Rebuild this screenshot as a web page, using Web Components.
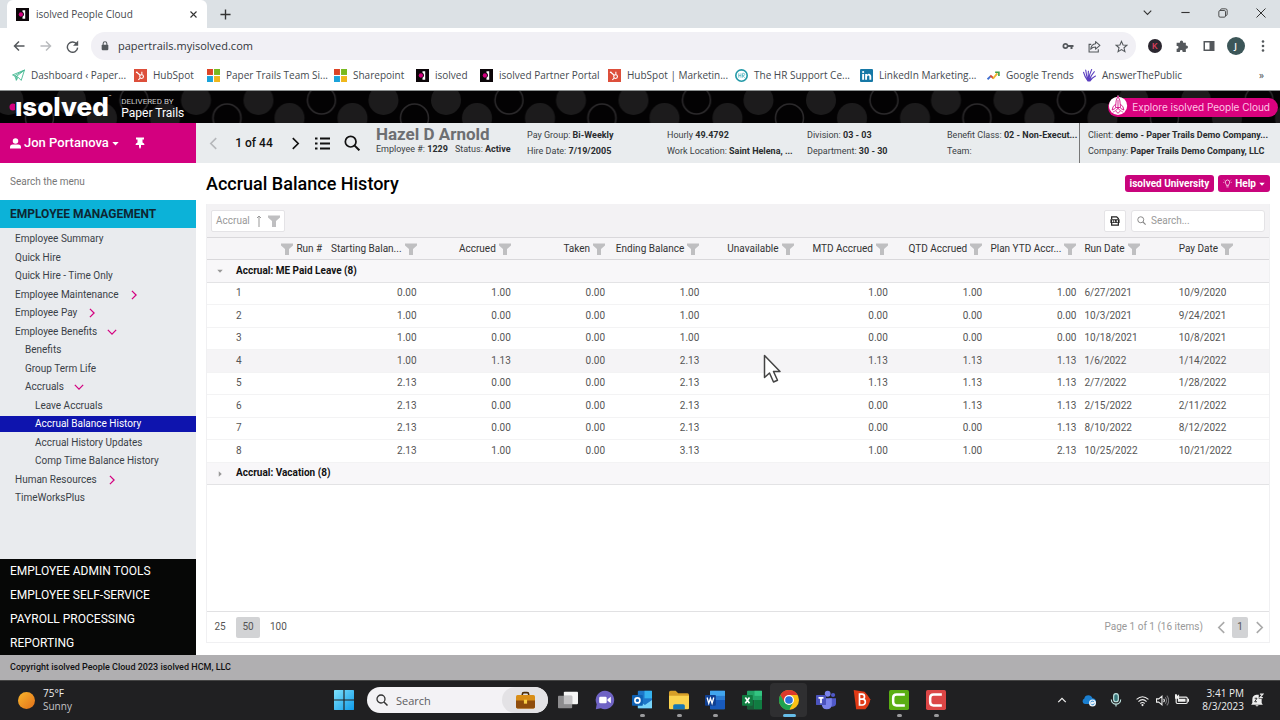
<!DOCTYPE html>
<html lang="en">
<head>
<meta charset="utf-8">
<meta name="viewport" content="width=device-width, initial-scale=1">
<title>isolved People Cloud</title>
<style>
    html, body {
        margin: 0;
        height: 100%;
    }

    body {
        --pink: #d3007f;
        --chrome-font: "Open Sans", "Noto Sans", sans-serif;
        display: flex;
        flex-direction: column;
        font: 10px/16px Roboto, "Liberation Sans", sans-serif;
        color: #333;
        background: #fff;
    }

    .workspace {
        flex: 1;
        display: flex;
        min-height: 0;
    }

    .content {
        flex: 1;
        min-width: 0;
        display: flex;
        flex-direction: column;
    }
</style>
</head>
<body>
    <browser-tabs></browser-tabs>
    <browser-toolbar></browser-toolbar>
    <bookmarks-bar></bookmarks-bar>
    <app-header></app-header>
    <div class="workspace">
        <side-menu></side-menu>
        <main class="content">
            <employee-bar></employee-bar>
            <page-title>Accrual Balance History</page-title>
            <accrual-grid></accrual-grid>
        </main>
    </div>
    <app-footer>Copyright isolved People Cloud 2023 isolved HCM, LLC</app-footer>
    <task-bar></task-bar>
    <mouse-pointer></mouse-pointer>

<script>
// All icons are drawn on a 24x24 box
const line = 'fill="none" stroke="currentColor" stroke-width="2"';
const bold = 'fill="none" stroke="currentColor" stroke-width="3"';

const icons = {
    close: `<path ${bold} d="M4 4l16 16M20 4L4 20"/>`,
    closeThin: `<path ${line} d="M3 3l18 18M21 3L3 21"/>`,
    plus: `<path ${bold} d="M12 1v22M1 12h22"/>`,
    down: `<path ${bold} d="M2 7l10 10L22 7"/>`,
    up: `<path ${bold} d="M3 17l9-9 9 9"/>`,
    left: `<path ${bold} d="M17 2L7 12l10 10"/>`,
    right: `<path ${bold} d="M7 2l10 10L7 22"/>`,
    minimize: `<path ${bold} d="M1 12h22"/>`,
    restore: `<path ${line} d="M6 6V5q0-3 3-3h9q4 0 4 4v9q0 3-3 3h-1"/><rect ${line} x="2" y="6" width="16" height="16" rx="3"/>`,
    back: `<path ${bold} d="M23 12H3M12 3l-9 9 9 9"/>`,
    forward: `<path ${bold} d="M1 12h20M12 3l9 9-9 9"/>`,
    reload: `<path fill="none" stroke="currentColor" stroke-width="2.6" d="M20 8a9.500 9.500 0 1 0 1.500 6"/><path fill="currentColor" d="M22.500 1v9.500H13z"/>`,
    lock: `<rect fill="currentColor" x="4" y="9" width="16" height="13" rx="2"/><path fill="none" stroke="currentColor" stroke-width="2.500" d="M7.500 10V6.500a4.500 4.500 0 0 1 9 0V10"/>`,
    key: `<path fill="currentColor" fill-rule="evenodd" d="M7 6a6 6 0 1 0 5.700 8H17v4h4v-4h2v-4H12.700A6 6 0 0 0 7 6zm0 3.500a2.500 2.500 0 1 1 0 5 2.500 2.500 0 0 1 0-5z"/>`,
    share: `<path ${line} d="M6 8H2v14h17v-5"/><path ${line} stroke-linejoin="round" d="M14 3l8 7-8 7v-4q-6 0-9 4 1-9 9-10z"/>`,
    star: `<path ${line} d="M12 2.500l2.900 6.600 7.100.6-5.400 4.700 1.700 7-6.300-3.800-6.300 3.800 1.700-7L2 9.700l7.100-.6z"/>`,
    puzzle: `<path fill="currentColor" d="M9 4a3 3 0 0 1 6 0v1h5v5h1a3 3 0 0 1 0 6h-1v6h-6v-1a2.500 2.500 0 0 0-5 0v1H3v-6h1a2.500 2.500 0 0 0 0-5H3V5h6z"/>`,
    panel: `<path fill="currentColor" fill-rule="evenodd" d="M1 2h22v20H1zm3 3v14h9V5z"/>`,
    dots: `<g fill="currentColor"><circle cx="12" cy="3" r="2.600"/><circle cx="12" cy="12" r="2.600"/><circle cx="12" cy="21" r="2.600"/></g>`,
    door: `<path fill="#0c0609" d="M0 0h24v24H0z"/><path fill="#fff" d="M12 4h5v16h-5v-4a5 5 0 0 0 0-9z"/><circle fill="#d3007f" cx="9" cy="12" r="4"/>`,
    plane: `<g fill="none" stroke="#3fb68e" stroke-width="1.600"><path d="M1 11L23 2l-6 19-6-6z"/><path d="M23 2L8 14v7l3-6M23 2L5 12.500M5 12.500L8 20"/></g>`,
    hubspot: `<path fill="#dd4f3b" d="M0 0h24v24H0z"/><g fill="none" stroke="#fff" stroke-width="2"><circle cx="14" cy="14" r="3.500"/><path d="M5 6l6.500 5.500M14.500 5v5.500M11.500 17L8 20"/></g><circle fill="#fff" cx="5" cy="6" r="1.600"/>`,
    microsoft: `<path fill="#dd4426" d="M0 0h11v11H0z"/><path fill="#78b91f" d="M13 0h11v11H13z"/><path fill="#1ba3da" d="M0 13h11v11H0z"/><path fill="#efb71b" d="M13 13h11v11H13z"/>`,
    hr: `<circle fill="#fff" stroke="#249aa8" stroke-width="3" cx="12" cy="12" r="10.500"/><path fill="none" stroke="#58b6c1" stroke-width="1.500" d="M7 8v8M11 8v8M7 12h4M14 16V8h2q2 0 2 2t-2 2h-2l4 4"/>`,
    linkedin: `<rect fill="#1678a6" width="24" height="24" rx="2"/><path fill="#fff" d="M4 9h3.500v11H4zM9.500 9H13v1.600q3.500-3.600 7 .4.800 1 .8 3V20h-3.500v-5.500q0-2.500-2-2.500T13 14.500V20H9.500z"/><circle fill="#fff" cx="5.800" cy="5.500" r="2"/>`,
    trends: `<path fill="none" stroke="#3f6fd2" stroke-width="3.400" d="M1 19l6-6"/><path fill="none" stroke="#d34b3d" stroke-width="3.400" d="M6 12l6 5"/><path fill="none" stroke="#efb52c" stroke-width="3.400" d="M11 18l8-10"/><path fill="none" stroke="#42a047" stroke-width="3" d="M15 6h7v7"/>`,
    coral: `<g fill="none" stroke="#5b3fc0" stroke-width="2" stroke-linecap="round"><path d="M1 6q2 8 8 16M5 2q1 10 5 20M10 4q-1 8 1 18M16 1q-5 9-5 21M21 5Q14 12 12 22M23 13q-6 3-10 9"/></g>`,
    user: `<circle fill="currentColor" cx="12" cy="6.500" r="6"/><path fill="currentColor" d="M0 23v-3q0-6 6-6h12q6 0 6 6v3z"/>`,
    pin: `<path fill="currentColor" d="M4 1h16v4h-3v6q4 1 4 5h-7v4l-2 4-2-4v-4H3q0-4 4-5V5H4z"/>`,
    caret: `<path fill="currentColor" d="M1 7h22L12 19z"/>`,
    caretRight: `<path fill="currentColor" d="M7 1v22l12-11z"/>`,
    list: `<path fill="none" stroke="currentColor" stroke-width="3" d="M8 4h16M8 12h16M8 20h16M0 4h4M0 12h4M0 20h4"/>`,
    search: `<circle fill="none" stroke="currentColor" stroke-width="2.600" cx="10" cy="10" r="8"/><path fill="none" stroke="currentColor" stroke-width="3" d="M16 16l7 7"/>`,
    filter: `<path fill="currentColor" d="M0 1h24v4l-8 7v12H8V12L0 5z"/>`,
    sort: `<path ${line} d="M12 24V2M8 6l4-4 4 4"/>`,
    xlsx: `<path fill="none" stroke="currentColor" stroke-width="3" d="M4 8V2h12l4 4v2M4 17v5h16v-5"/><path fill="currentColor" fill-rule="evenodd" d="M1 8h22v9H1zm4 2v5h3v-5zm5 0v5h3v-2h-1v-3zm6 0v5h3v-5z"/>`,
    bulb: `<path ${line} d="M9 17q0-3-2-5a6 6 0 1 1 10 0q-2 2-2 5zM9 21h6M1 9h2M21 9h2M3 2l2 2M21 2l-2 2"/>`,
    rocket: `<circle fill="#fff" cx="12" cy="13" r="11"/><path fill="#fff" d="M9 5l3-5 3 5z"/><g fill="none" stroke="#d3007f" stroke-width="1"><path d="M12 1q-3 5-3 14h6q0-9-3-14zM12 6v11M9 11q-4 3-4 7l4-2M15 11q4 3 4 7l-4-2M9 19l3 3 3-3-3-3zM6 21l2-2M18 21l-2-2"/></g>`,
    windows: `<defs><linearGradient id="w" x2="1" y2="1"><stop stop-color="#7fe1fb"/><stop offset="1" stop-color="#0f9bea"/></linearGradient></defs><path fill="url(#w)" d="M0 1q0-1 1-1h10.300v11.300H0zM12.700 0H23q1 0 1 1v10.300H12.700zM0 12.700h11.300V24H1q-1 0-1-1zM12.700 12.700H24V23q0 1-1 1H12.700z"/>`,
    briefcase: `<path fill="none" stroke="#4b2d0b" stroke-width="2" d="M8 6V4q0-2 2-2h4q2 0 2 2v2"/><rect fill="#d98e17" x="0" y="5" width="24" height="17" rx="2"/><path fill="#8e4c0c" d="M0 12h24v8q0 2-2 2H2q-2 0-2-2z"/><rect fill="#f8cf45" x="10" y="11" width="4" height="5"/>`,
    desktops: `<rect fill="#f5f5f5" x="7" y="2" width="17" height="15" rx="1"/><rect fill="#8d8c8e" x="0" y="7" width="17" height="15" rx="1"/><path fill="#c4c3c5" d="M7 7h10v10H7z"/>`,
    chat: `<path fill="#6f63c4" d="M12 1a11 11 0 1 1-5 20.800L1 23l1-6A11 11 0 0 1 12 1z"/><rect fill="#fff" x="5" y="8" width="9" height="8" rx="1.500"/><path fill="#fff" d="M15 11l4-3v8l-4-3z"/>`,
    outlook: `<rect fill="#1d77c9" x="7" y="1" width="17" height="21" rx="1"/><path fill="#35b2ee" d="M15 1h9v9h-9z"/><path fill="#77d4fa" d="M7 12l8.500 6 8.500-6v10H7z"/><rect fill="#0f62b5" x="0" y="6" width="13" height="13" rx="1"/><circle fill="none" stroke="#fff" stroke-width="2" cx="6.500" cy="12.500" r="3"/>`,
    folder: `<path fill="#d79f28" d="M0 3q0-2 2-2h6l3 3h11q2 0 2 2v4H0z"/><path fill="#fbd34f" d="M0 7h24v15q0 1-1 1H1q-1 0-1-1z"/><path fill="#1677b6" d="M5 23v-4q0-2 2-2h10q2 0 2 2v4z"/>`,
    word: `<rect fill="#2b7cd3" x="6" y="1" width="18" height="22" rx="1"/><path fill="#41a5ee" d="M6 1h18v6H6z"/><path fill="#185abd" d="M6 12h18v11H6z"/><rect fill="#103f91" x="0" y="6" width="13" height="13" rx="1"/><path fill="none" stroke="#fff" stroke-width="1.600" d="M2.500 9l2 7 2-6 2 6 2-7"/>`,
    excel: `<rect fill="#21a366" x="6" y="1" width="18" height="22" rx="1"/><path fill="#33c481" d="M15 1h9v6h-9z"/><path fill="#185c37" d="M6 12h9v11H6z"/><path fill="#107c41" d="M15 12h9v11h-9z"/><rect fill="#107c41" x="0" y="6" width="13" height="13" rx="1"/><path fill="none" stroke="#fff" stroke-width="2" d="M4 9l5 7M9 9l-5 7"/>`,
    chrome: `<circle fill="#fbc116" cx="12" cy="12" r="12"/><path fill="#dd3a2c" d="M1.600 6A12 12 0 0 1 22.400 6H12l-6 9z"/><path fill="#1fa251" d="M1.600 6l5.200 9 5.200 3 1 6A12 12 0 0 1 1.600 6z"/><path fill="#1fa251" d="M12 24l5.200-9-5.200 3z"/><circle fill="#fff" cx="12" cy="12" r="6"/><circle fill="#2d70dd" cx="12" cy="12" r="4.600"/>`,
    teams: `<circle fill="#7b83eb" cx="14" cy="4.500" r="3.500"/><circle fill="#5059c9" cx="20.500" cy="6" r="2.500"/><path fill="#5059c9" d="M16 10h8v6q0 4-4 4h-4z"/><path fill="#7b83eb" d="M7 10h12v7q0 6-6 6t-6-6z"/><rect fill="#4b53bc" x="0" y="6" width="12" height="12" rx="1"/><path fill="none" stroke="#fff" stroke-width="2" d="M3 9.500h6M6 9.500V16"/>`,
    bold: `<path fill="#e03a16" d="M2 0l13 2q4 4 7 9-1 7-6 12H5z"/><path fill="none" stroke="#fff" stroke-width="2" d="M9 5v13h3.500a3.500 3.500 0 0 0 0-7H9h3a3 3 0 0 0 0-6z"/>`,
    camtasia: `<rect fill="#5aae12" width="24" height="24" rx="2"/><path fill="none" stroke="#fff" stroke-width="3" stroke-linejoin="round" d="M19 5.500H9q-4 0-4 4v5q0 4 4 4h10"/>`,
    recorder: `<rect fill="#dc4646" width="24" height="24" rx="2"/><path fill="none" stroke="#fff" stroke-width="3" stroke-linejoin="round" d="M19 5.500H9q-4 0-4 4v5q0 4 4 4h10"/>`,
    sun: `<defs><linearGradient id="s" x2="1" y2="1"><stop stop-color="#f9b62c"/><stop offset="1" stop-color="#e2701a"/></linearGradient></defs><circle fill="url(#s)" cx="12" cy="12" r="12"/>`,
    cloud: `<path fill="#1b7fd0" d="M5 19a5 5 0 0 1-1-9.500Q5 4 11 4q5 0 7 5 5 0 6 5v5z"/><circle fill="#e9f2f8" cx="18" cy="17" r="6"/><path fill="none" stroke="#1b7fd0" stroke-width="1.600" d="M15 16a3 3 0 0 1 5.500-.500M21 18a3 3 0 0 1-5.500.500"/>`,
    mic: `<rect fill="#39777b" stroke="#bfe2e0" stroke-width="2" x="8" y="1" width="8" height="14" rx="4"/><path fill="none" stroke="#bfe2e0" stroke-width="2" d="M4 11a8 8 0 0 0 16 0M12 19v4"/>`,
    wifi: `<g ${line}><path d="M1 10q11-10 22 0M4.500 14q7.500-7 15 0M8 17.500q4-3.500 8 0"/></g><circle fill="currentColor" cx="12" cy="20.500" r="2"/>`,
    sound: `<path ${line} d="M1 9h4l6-5v16l-6-5H1zM14 9q3 3 0 6"/><path fill="none" stroke="#77777a" stroke-width="2" d="M17 6q5 6 0 12M20 3q7 9 0 18"/>`,
    battery: `<rect ${line} x="2" y="7" width="19" height="11" rx="2"/><path fill="currentColor" d="M5 10h13v5H5zM22 10h2v5h-2zM0 2h3l1 3 3-3v8H0z"/>`,
    bell: `<path fill="currentColor" d="M4 17V11q0-7 7-8h4v7h5v7l2 3H2zM9 21h6q-3 4-6 0z"/><path fill="none" stroke="currentColor" stroke-width="2" d="M17 2h5l-5 6h5"/><path fill="none" stroke="#202022" stroke-width="1.500" d="M8 9h4l-4 6h4"/>`
};

class UiIcon extends HTMLElement {
    connectedCallback() {
        const size = this.getAttribute('size') || 14;
        this.attachShadow({ mode: 'open' });
        this.shadowRoot.innerHTML = `
            <style>
                :host { display: inline-flex; flex: none; }
                svg { display: block; }
            </style>
            <svg width="${size}" height="${size}" viewBox="0 0 24 24" aria-hidden="true">${icons[this.getAttribute('name')]}</svg>
        `;
    }
}

customElements.define('ui-icon', UiIcon);

const controls = `
    * { box-sizing: border-box; }
    button, input { font: inherit; color: inherit; border: 0; background: none; padding: 0; margin: 0; outline: 0; }
    button { display: inline-flex; align-items: center; justify-content: center; cursor: pointer; white-space: nowrap; }
    a { color: inherit; text-decoration: none; }
`;

class BrowserTabs extends HTMLElement {
    connectedCallback() {
        this.attachShadow({ mode: 'open' });
        this.shadowRoot.innerHTML = `
            <style>
                ${controls}
                :host { display: flex; height: 28px; padding-left: 7px; background: #dce1e5; font-family: var(--chrome-font); color: #333; }
                .tab { display: flex; align-items: center; gap: 7px; width: 200px; padding: 0 9px; background: #fff; border-radius: 6px 6px 0 0; font-size: 10px; }
                .tab span { flex: 1; color: #45494d; }
                .new { width: 36px; }
                .window { margin-left: auto; display: flex; }
                .window button { width: 38px; padding-bottom: 3px; }
            </style>
            <div class="tab">
                <ui-icon name="door" size="13"></ui-icon>
                <span>isolved People Cloud</span>
                <button aria-label="Close tab"><ui-icon name="close" size="9"></ui-icon></button>
            </div>
            <button class="new" aria-label="New tab"><ui-icon name="plus" size="11"></ui-icon></button>
            <div class="window">
                <button aria-label="Search tabs"><ui-icon name="down" size="9"></ui-icon></button>
                <button aria-label="Minimize"><ui-icon name="minimize" size="9"></ui-icon></button>
                <button aria-label="Restore"><ui-icon name="restore" size="10"></ui-icon></button>
                <button aria-label="Close"><ui-icon name="closeThin" size="12"></ui-icon></button>
            </div>
        `;
    }
}

customElements.define('browser-tabs', BrowserTabs);

class BrowserToolbar extends HTMLElement {
    connectedCallback() {
        this.attachShadow({ mode: 'open' });
        this.shadowRoot.innerHTML = `
            <style>
                ${controls}
                :host { display: flex; align-items: center; height: 36px; padding: 0 4px 0 5px; background: #fff; font-family: var(--chrome-font); color: #54585c; }
                button { width: 27px; height: 28px; }
                .off { color: #b9bbbe; }
                .address { flex: 1; display: flex; align-items: center; height: 28px; margin: 0 5px; padding: 0 1px 0 9px; border-radius: 14px; background: #f1f0f5; }
                .address input { flex: 1; min-width: 0; margin-left: 8px; font-size: 11px; color: #33373b; }
                .badge { width: 14px; height: 14px; border-radius: 50%; background: #2b2730; color: #e0405e; font-size: 9px; font-weight: 600; line-height: 14px; text-align: center; }
                .avatar { width: 18px; height: 18px; background: #3c5658; color: #fff; line-height: 18px; }
            </style>
            <button aria-label="Back"><ui-icon name="back" size="12"></ui-icon></button>
            <button class="off" aria-label="Forward"><ui-icon name="forward" size="12"></ui-icon></button>
            <button aria-label="Reload"><ui-icon name="reload" size="13"></ui-icon></button>
            <div class="address">
                <ui-icon name="lock" size="10"></ui-icon>
                <input type="text" aria-label="Address" value="papertrails.myisolved.com">
                <button aria-label="Passwords"><ui-icon name="key" size="12"></ui-icon></button>
                <button aria-label="Share"><ui-icon name="share" size="13"></ui-icon></button>
                <button aria-label="Bookmark"><ui-icon name="star" size="13"></ui-icon></button>
            </div>
            <button aria-label="Extension"><span class="badge">K</span></button>
            <button aria-label="Extensions"><ui-icon name="puzzle" size="13"></ui-icon></button>
            <button aria-label="Side panel"><ui-icon name="panel" size="12"></ui-icon></button>
            <button aria-label="Profile"><span class="badge avatar">J</span></button>
            <button aria-label="Menu"><ui-icon name="dots" size="12"></ui-icon></button>
        `;
    }
}

customElements.define('browser-toolbar', BrowserToolbar);

class BookmarksBar extends HTMLElement {
    connectedCallback() {
        const bookmarks = [
            ['plane', 'Dashboard ‹ Paper...'],
            ['hubspot', 'HubSpot'],
            ['microsoft', 'Paper Trails Team Si...'],
            ['microsoft', 'Sharepoint'],
            ['door', 'isolved'],
            ['door', 'isolved Partner Portal'],
            ['hubspot', 'HubSpot | Marketin...'],
            ['hr', 'The HR Support Ce...'],
            ['linkedin', 'LinkedIn Marketing...'],
            ['trends', 'Google Trends'],
            ['coral', 'AnswerThePublic']
        ];

        this.attachShadow({ mode: 'open' });
        this.shadowRoot.innerHTML = `
            <style>
                ${controls}
                :host { display: flex; align-items: center; height: 27px; padding: 0 16px 4px 12px; background: #fff; border-bottom: 1px solid #8b8f8f; box-sizing: border-box; font-family: var(--chrome-font); color: #454a4f; }
                nav { flex: 1; display: grid; grid-template-columns: 122px 73px 127px 82px 64px 128px 127px 125px 127px 96px auto; }
                a { display: flex; align-items: center; gap: 6px; white-space: nowrap; }
            </style>
            <nav>
                ${bookmarks.map(([icon, label]) => `<a href="#"><ui-icon name="${icon}" size="13"></ui-icon>${label}</a>`).join('')}
            </nav>
            <button aria-label="More bookmarks">»</button>
        `;
    }
}

customElements.define('bookmarks-bar', BookmarksBar);

class AppHeader extends HTMLElement {
    connectedCallback() {
        this.attachShadow({ mode: 'open' });
        this.shadowRoot.innerHTML = `
            <style>
                ${controls}
                :host { position: relative; display: flex; align-items: center; height: 32px; padding: 0 2px 0 9px; background: #030203; color: #fff; overflow: hidden; box-sizing: border-box; }
                .pattern { position: absolute; inset: 0; width: 100%; height: 100%; }
                .logo { position: relative; display: flex; align-items: center; font: 800 26px/32px Inter, sans-serif; }
                .logo sup { align-self: flex-start; font: 4px/12px Inter, sans-serif; }
                .partner { position: relative; margin-left: 10px; font-size: 12px; line-height: 12px; }
                .partner small { display: block; font-size: 8px; line-height: 11px; color: #c8c8c8; }
                .explore { position: relative; margin-left: auto; height: 19px; padding-right: 8px; gap: 4px; border-radius: 10px; background: #d9027e; color: #ffc4e6; font: 10px/19px Inter, sans-serif; }
                .explore ui-icon { margin-top: -4px; }
            </style>
            <svg class="pattern" aria-hidden="true">
                <defs>
                    <pattern id="dots" x="55" width="187.500" height="32" patternUnits="userSpaceOnUse">
                        <g fill="#1c1b1c">
                            <circle cx="16" cy="9" r="15"/><circle cx="141" cy="9" r="15"/>
                            <circle cx="47" cy="27" r="15"/><circle cx="110" cy="27" r="15"/>
                        </g>
                        <g fill="none" stroke="#2b292b" stroke-width="1.500">
                            <circle cx="79" cy="9" r="14"/><circle cx="172" cy="27" r="14"/>
                        </g>
                    </pattern>
                </defs>
                <rect width="100%" height="100%" fill="url(#dots)"/>
            </svg>
            <div class="logo">
                <svg width="6" height="8" viewBox="0 0 6 8" aria-hidden="true"><circle cx="4" cy="4" r="3.500" fill="#d3007f"/></svg>ısolved<sup>™</sup>
            </div>
            <div class="partner"><small>DELIVERED BY</small>Paper Trails</div>
            <button class="explore"><ui-icon name="rocket" size="20"></ui-icon>Explore isolved People Cloud</button>
        `;
    }
}

customElements.define('app-header', AppHeader);

class SideMenu extends HTMLElement {
    connectedCallback() {
        // [label, depth, arrow]
        const items = [
            ['Employee Summary', 0],
            ['Quick Hire', 0],
            ['Quick Hire - Time Only', 0],
            ['Employee Maintenance', 0, 'right'],
            ['Employee Pay', 0, 'right'],
            ['Employee Benefits', 0, 'down'],
            ['Benefits', 1],
            ['Group Term Life', 1],
            ['Accruals', 1, 'down'],
            ['Leave Accruals', 2],
            ['Accrual Balance History', 2],
            ['Accrual History Updates', 2],
            ['Comp Time Balance History', 2],
            ['Human Resources', 0, 'right'],
            ['TimeWorksPlus', 0]
        ];
        const sections = ['EMPLOYEE ADMIN TOOLS', 'EMPLOYEE SELF-SERVICE', 'PAYROLL PROCESSING', 'REPORTING'];

        this.attachShadow({ mode: 'open' });
        this.shadowRoot.innerHTML = `
            <style>
                ${controls}
                :host { display: flex; flex-direction: column; width: 196px; flex: none; background: #e9ebee; }
                .user { display: flex; align-items: center; height: 40px; padding: 0 10px; gap: 15px; background: var(--pink); color: #fff; font-size: 13px; font-weight: 500; }
                .user button { gap: 3px; }
                .search { height: 37px; padding: 0 10px; background: #fff; font-size: 10px; }
                .search::placeholder { color: #777; opacity: 1; }
                h2 { margin: 0; padding: 0 10px; font-size: 12px; line-height: 28px; font-weight: 700; color: #0d2733; background: #0cb2d8; }
                ul { list-style: none; margin: 0; padding: 0; }
                .items { display: flex; flex-direction: column; justify-content: space-between; height: 280px; padding: 3px 0 2px; }
                .items a { display: flex; align-items: center; gap: 10px; line-height: 16px; padding-left: 15px; color: #3a3f47; }
                .items .d1 { padding-left: 25px; }
                .items .d2 { padding-left: 35px; }
                .items a[aria-current] { background: #0e14ae; color: #fff; }
                .items ui-icon { color: var(--pink); }
                .sections { margin-top: auto; background: #060706; color: #fff; }
                .sections a { display: block; padding-left: 10px; font-size: 12px; line-height: 24px; }
            </style>
            <div class="user">
                <button><ui-icon name="user" size="11"></ui-icon>Jon Portanova<ui-icon name="caret" size="7"></ui-icon></button>
                <button aria-label="Pin menu"><ui-icon name="pin" size="12"></ui-icon></button>
            </div>
            <input class="search" type="text" placeholder="Search the menu" aria-label="Search the menu">
            <h2>EMPLOYEE MANAGEMENT</h2>
            <ul class="items">
                ${items.map(([label, depth, arrow]) => `
                    <li><a class="d${depth}" href="#"${label === 'Accrual Balance History' ? ' aria-current="page"' : ''}>${label}${arrow ? `<ui-icon name="${arrow}" size="10"></ui-icon>` : ''}</a></li>
                `).join('')}
            </ul>
            <ul class="sections">
                ${sections.map(label => `<li><a href="#">${label}</a></li>`).join('')}
            </ul>
        `;
    }
}

customElements.define('side-menu', SideMenu);

class EmployeeBar extends HTMLElement {
    connectedCallback() {
        const details = [
            [['Pay Group:', 'Bi-Weekly'], ['Hire Date:', '7/19/2005']],
            [['Hourly', '49.4792'], ['Work Location:', 'Saint Helena, ...']],
            [['Division:', '03 - 03'], ['Department:', '30 - 30']],
            [['Benefit Class:', '02 - Non-Execut...'], ['Team:', '']],
            [['Client:', 'demo - Paper Trails Demo Company...'], ['Company:', 'Paper Trails Demo Company, LLC']]
        ];

        this.attachShadow({ mode: 'open' });
        this.shadowRoot.innerHTML = `
            <style>
                ${controls}
                :host { display: flex; height: 40px; background: #e9ecee; color: #3b3f44; font-size: 9px; }
                .pager { display: flex; align-items: center; width: 180px; padding-left: 8px; color: #111; font-size: 12px; }
                .pager span { width: 64px; text-align: center; font-weight: 500; }
                .pager button { width: 18px; }
                .pager .tools { display: flex; margin-left: 3px; }
                .pager .tools button { width: 30px; }
                .pager button:disabled { color: #b5b7ba; }
                .name { width: 151px; white-space: nowrap; }
                h1 { margin: 2px 0 0; font-size: 17px; line-height: 18px; font-weight: 700; color: #6d6f72; }
                .name p { display: flex; gap: 7px; margin: 0; line-height: 13px; }
                b { font-weight: 700; color: #2a2c2f; }
                .details { flex: 1; min-width: 0; display: grid; grid-template-columns: repeat(4, minmax(0, 140px)) 1fr; }
                .details div { padding-top: 4px; white-space: nowrap; }
                .details div:last-child { padding-left: 8px; margin-left: -8px; border-left: 1px solid #777; }
                .details p { margin: 0; line-height: 16px; }
            </style>
            <div class="pager">
                <button disabled aria-label="Previous employee"><ui-icon name="left" size="13"></ui-icon></button>
                <span>1 of 44</span>
                <button aria-label="Next employee"><ui-icon name="right" size="13"></ui-icon></button>
                <div class="tools">
                    <button aria-label="Employee list"><ui-icon name="list" size="15"></ui-icon></button>
                    <button aria-label="Find employee"><ui-icon name="search" size="16"></ui-icon></button>
                </div>
            </div>
            <div class="name">
                <h1>Hazel D Arnold</h1>
                <p><span>Employee #: <b>1229</b></span><span>Status: <b>Active</b></span></p>
            </div>
            <div class="details">
                ${details.map(lines => `<div>${lines.map(([label, value]) => `<p>${label} <b>${value}</b></p>`).join('')}</div>`).join('')}
            </div>
        `;
    }
}

customElements.define('employee-bar', EmployeeBar);

class PageTitle extends HTMLElement {
    connectedCallback() {
        this.attachShadow({ mode: 'open' });
        this.shadowRoot.innerHTML = `
            <style>
                ${controls}
                :host { display: flex; align-items: center; gap: 4px; height: 41px; padding: 0 10px; box-sizing: border-box; }
                h1 { flex: 1; margin: 0; font-size: 18px; font-weight: 500; line-height: 24px; color: #000; }
                button { height: 17px; padding: 0 5px; gap: 3px; border-radius: 3px; background: #c9047c; color: #fff; font-size: 10px; font-weight: 700; }
            </style>
            <h1><slot></slot></h1>
            <button>isolved University</button>
            <button><ui-icon name="bulb" size="9"></ui-icon>Help<ui-icon name="caret" size="6"></ui-icon></button>
        `;
    }
}

customElements.define('page-title', PageTitle);

class AccrualGrid extends HTMLElement {
    connectedCallback() {
        const columns = ['Run #', 'Starting Balan...', 'Accrued', 'Taken', 'Ending Balance', 'Unavailable', 'MTD Accrued', 'QTD Accrued', 'Plan YTD Accr...', 'Run Date', 'Pay Date'];
        const rows = [
            ['1', '0.00', '1.00', '0.00', '1.00', '', '1.00', '1.00', '1.00', '6/27/2021', '10/9/2020'],
            ['2', '1.00', '0.00', '0.00', '1.00', '', '0.00', '0.00', '0.00', '10/3/2021', '9/24/2021'],
            ['3', '1.00', '0.00', '0.00', '1.00', '', '0.00', '0.00', '0.00', '10/18/2021', '10/8/2021'],
            ['4', '1.00', '1.13', '0.00', '2.13', '', '1.13', '1.13', '1.13', '1/6/2022', '1/14/2022'],
            ['5', '2.13', '0.00', '0.00', '2.13', '', '1.13', '1.13', '1.13', '2/7/2022', '1/28/2022'],
            ['6', '2.13', '0.00', '0.00', '2.13', '', '0.00', '1.13', '1.13', '2/15/2022', '2/11/2022'],
            ['7', '2.13', '0.00', '0.00', '2.13', '', '0.00', '0.00', '1.13', '8/10/2022', '8/12/2022'],
            ['8', '2.13', '1.00', '0.00', '3.13', '', '1.00', '1.00', '2.13', '10/25/2022', '10/21/2022']
        ];
        const filter = '<ui-icon name="filter" size="12"></ui-icon>';
        const heading = (label, i) => {
            const side = i > 8 ? 'start' : 'end';
            return `<th scope="col"><div class="${side}">${i === 0 ? filter + label : label + filter}</div></th>`;
        };

        this.attachShadow({ mode: 'open' });
        this.shadowRoot.innerHTML = `
            <style>
                ${controls}
                :host { flex: 1; display: flex; flex-direction: column; margin: 0 10px 12px; border: 1px solid #f0f0f2; border-top: 0; box-sizing: border-box; }
                .tools { display: flex; align-items: center; gap: 5px; height: 33px; padding: 0 4px; background: #f3f2f4; }
                .tools > * { height: 22px; background: #fff; border: 1px solid #e4e3e6; border-radius: 2px; }
                .group { margin-right: auto; padding: 0 4px; color: #999; gap: 3px; }
                .export { width: 22px; color: #222; }
                .search { display: flex; align-items: center; gap: 5px; width: 134px; padding: 0 5px; color: #888; border-radius: 3px; }
                .search input { flex: 1; min-width: 0; }
                .search input::placeholder { color: #999; opacity: 1; }
                table { width: 100%; height: 248px; table-layout: fixed; border-collapse: collapse; line-height: 16px; }
                .toggle { width: 25px; }
                th, td { padding: 0 4px; text-align: right; white-space: nowrap; border-bottom: 1px solid #f3f3f4; }
                td { color: #555; }
                tr { height: 22px; }
                thead tr { background: #f6f5f7; }
                thead th { border-top: 1px solid #d9d8db; border-bottom: 1px solid #d9d8db; font-weight: 400; color: #333; }
                th div { display: flex; align-items: center; justify-content: flex-end; gap: 3px; }
                th div.start { justify-content: flex-start; }
                ui-icon[name="filter"] { color: #bfbfc1; }
                td:nth-child(2), td:nth-child(n+11) { text-align: left; }
                .group-row { background: #f8f7f9; }
                .group-row th { text-align: left; border-bottom-color: #e3e3e5; font-weight: 700; color: #111; }
                .group-row td { padding: 0; text-align: center; border-bottom-color: #e3e3e5; }
                .group-row button { width: 24px; color: #999; vertical-align: middle; }
                .hover { background: #f5f4f6; }
                .pages { display: flex; align-items: center; margin-top: auto; height: 31px; padding: 0 2px 0 1px; border-top: 1px solid #e1e1e3; color: #555; }
                .sizes { display: flex; gap: 4px; margin-right: auto; }
                .pages button { min-width: 16px; height: 21px; border-radius: 2px; }
                .sizes button { min-width: 24px; padding: 0 6px; }
                .pages button[aria-current] { background: #d2d3d5; }
                .pages span { color: #999; margin-right: 10px; }
                .pages .step { color: #aaa; }
                .turn { display: flex; gap: 3px; }
            </style>
            <div class="tools">
                <button class="group">Accrual <ui-icon name="sort" size="12"></ui-icon>${filter}</button>
                <button class="export" aria-label="Export"><ui-icon name="xlsx" size="10"></ui-icon></button>
                <label class="search"><ui-icon name="search" size="9"></ui-icon><input type="text" placeholder="Search..." aria-label="Search"></label>
            </div>
            <table>
                <thead>
                    <tr><th class="toggle"></th>${columns.map(heading).join('')}</tr>
                </thead>
                <tbody>
                    <tr class="group-row">
                        <td><button aria-label="Collapse"><ui-icon name="caret" size="6"></ui-icon></button></td>
                        <th colspan="11" scope="rowgroup">Accrual: ME Paid Leave (8)</th>
                    </tr>
                    ${rows.map(row => `
                        <tr${row[0] === '4' ? ' class="hover"' : ''}><td></td>${row.map(cell => `<td>${cell}</td>`).join('')}</tr>
                    `).join('')}
                    <tr class="group-row">
                        <td><button aria-label="Expand"><ui-icon name="caretRight" size="6"></ui-icon></button></td>
                        <th colspan="11" scope="rowgroup">Accrual: Vacation (8)</th>
                    </tr>
                </tbody>
            </table>
            <div class="pages">
                <div class="sizes">
                    <button>25</button>
                    <button aria-current="true">50</button>
                    <button>100</button>
                </div>
                <span>Page 1 of 1 (16 items)</span>
                <div class="turn">
                    <button class="step" aria-label="Previous page"><ui-icon name="left" size="13"></ui-icon></button>
                    <button aria-current="page">1</button>
                    <button class="step" aria-label="Next page"><ui-icon name="right" size="13"></ui-icon></button>
                </div>
            </div>
        `;
    }
}

customElements.define('accrual-grid', AccrualGrid);

class AppFooter extends HTMLElement {
    connectedCallback() {
        this.attachShadow({ mode: 'open' });
        this.shadowRoot.innerHTML = `
            <style>
                :host { display: block; padding: 0 10px; background: #b0afb1; color: #111; font-size: 9px; line-height: 25px; font-weight: 500; }
            </style>
            <slot></slot>
        `;
    }
}

customElements.define('app-footer', AppFooter);

class TaskBar extends HTMLElement {
    connectedCallback() {
        // [icon, label, running]
        const apps = [
            ['desktops', 'Task view'],
            ['chat', 'Chat'],
            ['outlook', 'Outlook', true],
            ['folder', 'File Explorer', true],
            ['word', 'Word', true],
            ['excel', 'Excel'],
            ['chrome', 'Chrome', true],
            ['teams', 'Teams'],
            ['bold', 'Bold'],
            ['camtasia', 'Camtasia', true],
            ['recorder', 'Camtasia Recorder', true]
        ];

        this.attachShadow({ mode: 'open' });
        this.shadowRoot.innerHTML = `
            <style>
                ${controls}
                :host { display: grid; grid-template-columns: 1fr auto 1fr; align-items: center; height: 40px; background: #202022; color: #eee; font: 10px/13px var(--chrome-font); box-shadow: inset 0 1px #444; }
                .weather { display: flex; align-items: center; gap: 8px; padding-left: 18px; }
                .weather small { display: block; font-size: 10px; color: #c4c4c6; }
                .center { display: flex; align-items: center; height: 100%; }
                .start { width: 36px; height: 36px; margin-right: 5px; }
                .search { display: flex; align-items: center; width: 181px; height: 26px; padding-left: 9px; border-radius: 13px; background: #f3f2f5; color: #333; overflow: hidden; margin-right: 2px; }
                .search input { flex: 1; min-width: 0; margin-left: 8px; font-size: 11px; }
                .search input::placeholder { color: #5c5c60; opacity: 1; }
                .search div { display: flex; align-items: center; justify-content: center; width: 46px; height: 26px; border-radius: 13px; background: #e3e2e5; }
                .apps { display: flex; width: 404px; }
                .apps button { position: relative; flex: 1; height: 34px; border-radius: 4px; }
                .apps .running::after { content: ""; position: absolute; bottom: 0; left: 50%; width: 5px; height: 3px; margin-left: -2px; border-radius: 2px; background: #9a9a9c; }
                .apps .active { background: #2f2f31; }
                .apps .active::after { width: 13px; margin-left: -6px; background: #66bde8; }
                .tray { display: flex; align-items: center; justify-content: flex-end; padding-right: 16px; }
                .tray button { width: 27px; }
                .status { display: flex; margin-left: 3px; }
                .status button { width: 20px; }
                .clock { margin: 0 6px 0 10px; text-align: right; }
            </style>
            <div class="weather">
                <ui-icon name="sun" size="17"></ui-icon>
                <div>75°F<small>Sunny</small></div>
            </div>
            <div class="center">
                <button class="start" aria-label="Start"><ui-icon name="windows" size="20"></ui-icon></button>
                <label class="search">
                    <ui-icon name="search" size="12"></ui-icon>
                    <input type="text" placeholder="Search" aria-label="Search">
                    <div><ui-icon name="briefcase" size="19"></ui-icon></div>
                </label>
                <div class="apps">
                    ${apps.map(([icon, label, running]) => `
                        <button class="${running ? 'running' : ''} ${icon === 'chrome' ? 'active' : ''}" aria-label="${label}"><ui-icon name="${icon}" size="20"></ui-icon></button>
                    `).join('')}
                </div>
            </div>
            <div class="tray">
                <button aria-label="Hidden icons"><ui-icon name="up" size="10"></ui-icon></button>
                <button aria-label="OneDrive"><ui-icon name="cloud" size="14"></ui-icon></button>
                <button aria-label="Microphone"><ui-icon name="mic" size="14"></ui-icon></button>
                <div class="status">
                    <button aria-label="Network"><ui-icon name="wifi" size="13"></ui-icon></button>
                    <button aria-label="Volume"><ui-icon name="sound" size="13"></ui-icon></button>
                    <button aria-label="Battery"><ui-icon name="battery" size="14"></ui-icon></button>
                </div>
                <div class="clock">3:41 PM<br>8/3/2023</div>
                <ui-icon name="bell" size="14"></ui-icon>
            </div>
        `;
    }
}

customElements.define('task-bar', TaskBar);

class MousePointer extends HTMLElement {
    connectedCallback() {
        this.attachShadow({ mode: 'open' });
        this.shadowRoot.innerHTML = `
            <style>
                :host { position: absolute; left: 763px; top: 354px; pointer-events: none; }
                svg { display: block; }
            </style>
            <svg width="19" height="31" viewBox="0 0 19 31" aria-hidden="true">
                <path fill="#fff" stroke="#444" stroke-width="1.500" stroke-linejoin="round" d="M1.500 1.500v22l5-4.500 4 9 4-1.800-4-8.700H17z"/>
            </svg>
        `;
    }
}

customElements.define('mouse-pointer', MousePointer);
</script>
</body>
</html>
